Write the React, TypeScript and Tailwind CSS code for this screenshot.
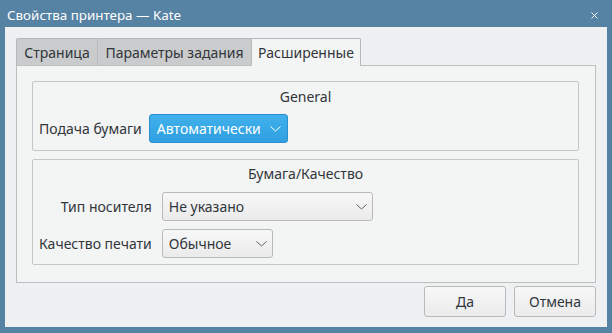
import { X } from 'lucide-react'

function Chevron() {
    return (
        <svg width="11" height="6" viewBox="0 0 11 6" fill="none" stroke="currentColor" strokeWidth="1">
            <path d="M0.5 0.5 L5.5 5 L10.5 0.5" />
        </svg>
    )
}

function Combo({ text, width, blue }: { text: string; width: string; blue?: boolean }) {
    return (
        <div
            className={
                blue
                    ? `${width} h-[29px] flex items-center justify-between pl-[7px] pr-[6px] rounded-[3px] border border-[#2a8fd0] bg-gradient-to-b from-[#40b1ec] to-[#2f9fe0] text-white`
                    : `${width} h-[29px] flex items-center justify-between pl-[6px] pr-[5px] rounded-[3px] border border-[#b9babb] bg-gradient-to-b from-[#f7f7f7] to-[#ebebeb] text-[#31363b]`
            }
        >
            <span>{text}</span>
            <span className={blue ? 'text-white' : 'text-[#5b6066]'}>
                <Chevron />
            </span>
        </div>
    )
}

export default function App() {
    return (
        <div
            className="w-[612px] h-[333px] bg-[#5682a3] flex flex-col text-[14px] text-[#31363b]"
            style={{ fontFamily: '"Noto Sans", "DejaVu Sans", sans-serif' }}
        >
            {/* title bar */}
            <div className="h-[27px] flex items-center justify-between pl-[7px] pr-[12px] text-white text-[13.4px] pt-[3px]">
                <span>Свойства принтера — Kate</span>
                <X size={11} strokeWidth={2} />
            </div>

            <div className="flex-1 mx-[5px] mb-[6px] bg-[#eff0f1] flex flex-col px-[11px] pt-[11px] pb-[10px]">
                {/* tabs */}
                <div className="flex h-[27px] relative z-10">
                    <div className="w-[82px] flex items-center justify-center bg-[#cacbcc] border border-b-0 border-[#b7b8b9] rounded-tl-[2px]">
                        Страница
                    </div>
                    <div className="w-[154px] flex items-center justify-center bg-[#cacbcc] border border-l-0 border-b-0 border-[#b7b8b9]">
                        Параметры задания
                    </div>
                    <div className="w-[109px] h-[28px] flex items-center justify-center bg-[#f3f4f4] border border-l-0 border-b-0 border-[#b7b8b9] rounded-tr-[2px]">
                        Расширенные
                    </div>
                </div>

                {/* pane */}
                <div className="h-[218px] border border-[#bcbebf] bg-[#f3f4f4] pl-[15px] pr-[16px] pt-[15px] flex flex-col gap-[8px]">
                    <div className="h-[70px] border border-[#c4c6c7] rounded-[2px] px-[6px] pt-[5px] flex flex-col">
                        <div className="h-[18px] flex items-center justify-center">General</div>
                        <div className="flex items-center gap-[7px] mt-[9px]">
                            <span>Подача бумаги</span>
                            <Combo text="Автоматически" width="w-[139px]" blue />
                        </div>
                    </div>

                    <div className="h-[106px] border border-[#c4c6c7] rounded-[2px] px-[6px] pt-[4px] flex flex-col">
                        <div className="h-[18px] flex items-center justify-center">Бумага/Качество</div>
                        <div className="grid grid-cols-[auto_auto] justify-start items-center gap-x-[10px] gap-y-[8px] mt-[10px]">
                            <span className="text-right">Тип носителя</span>
                            <Combo text="Не указано" width="w-[211px]" />
                            <span className="text-right">Качество печати</span>
                            <Combo text="Обычное" width="w-[111px]" />
                        </div>
                    </div>
                </div>

                {/* buttons */}
                <div className="flex justify-end gap-[8px] mt-[3px]">
                    <button className="w-[82px] h-[31px] rounded-[3px] border border-[#b9babb] bg-gradient-to-b from-[#f7f7f7] to-[#ebebeb]">
                        Да
                    </button>
                    <button className="w-[82px] h-[31px] rounded-[3px] border border-[#b9babb] bg-gradient-to-b from-[#f7f7f7] to-[#ebebeb]">
                        Отмена
                    </button>
                </div>
            </div>
        </div>
    )
}
